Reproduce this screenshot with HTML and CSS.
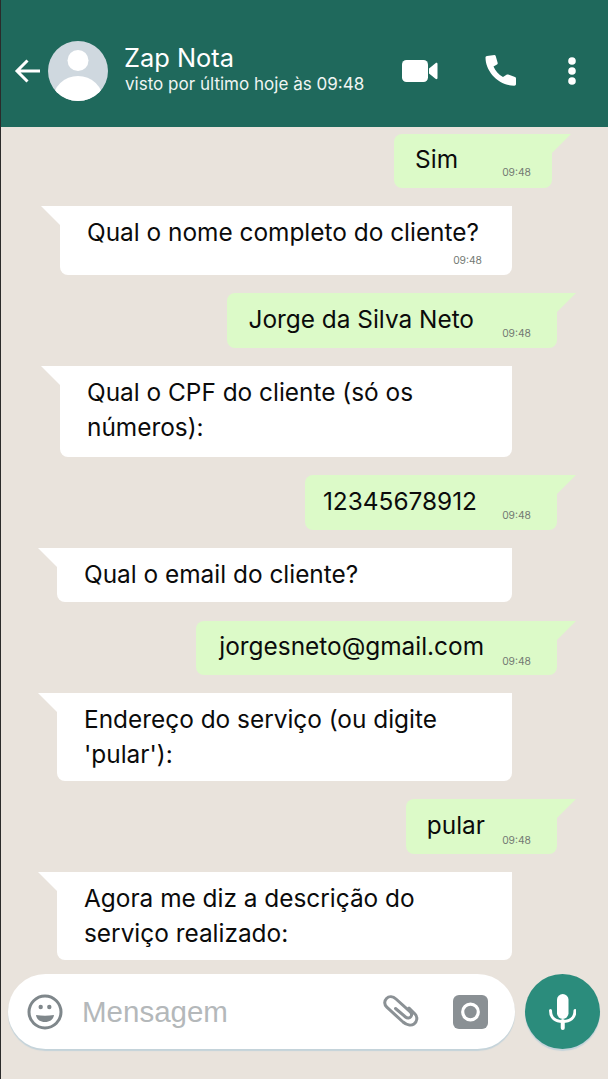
FILE: index.html
```html
<!DOCTYPE html>
<html lang="pt-BR">
<head>
    <meta charset="UTF-8">
    <meta name="viewport" content="width=device-width, initial-scale=1.0">
    <title>Zap Nota</title>
    <link rel="stylesheet" href="styles.css">
</head>
<body>
    <header class="topbar">
        <svg class="back" width="28" height="26" viewBox="0 0 28 26">
            <path d="M26 13H3M13.500 2.500L3 13l10.500 10.500" fill="none" stroke="#fff" stroke-width="3"/>
        </svg>
        <svg class="avatar" width="60" height="60" viewBox="0 0 60 60">
            <defs><clipPath id="round"><circle cx="30" cy="30" r="30"/></clipPath></defs>
            <circle cx="30" cy="30" r="30" fill="#cfd8df"/>
            <circle cx="30" cy="19.500" r="10.500" fill="#fff"/>
            <ellipse cx="30" cy="59" rx="25" ry="24" fill="#fff" clip-path="url(#round)"/>
        </svg>
        <div class="contact">
            <div class="contact-name">Zap Nota</div>
            <div class="contact-seen">visto por último hoje às 09:48</div>
        </div>
        <svg class="video" width="36" height="22" viewBox="0 0 36 22">
            <rect x="0" y="0" width="26" height="22" rx="4.500" fill="#fff"/>
            <path d="M27 8.500L33.500 3.200C34.500 2.500 35.500 3 35.500 4V18C35.500 19 34.500 19.500 33.500 18.800L27 13.500Z" fill="#fff"/>
        </svg>
        <svg class="phone" width="32" height="32" viewBox="0 0 32 32">
            <path d="M2 1L9.500 0C10 0 10.500 .3 10.700 1L12.700 8C12.800 8.600 12.600 9.200 12 9.600L8.500 11.500C10.500 16 13.500 19.500 18 22L21.500 19.800C22 19.400 22.700 19.300 23.300 19.600L30 22C30.700 22.300 31 22.800 31 23.500V29C31 30 30.300 30.700 29.300 30.700C13 30.700 .5 16 .5 2.500C.5 1.700 1 1.100 2 1Z" fill="#fff"/>
        </svg>
        <svg class="dots" width="8" height="28" viewBox="0 0 8 28">
            <circle cx="4" cy="4" r="3.800" fill="#fff"/>
            <circle cx="4" cy="14" r="3.800" fill="#fff"/>
            <circle cx="4" cy="24" r="3.800" fill="#fff"/>
        </svg>
    </header>

    <main class="chat">
        <div class="msg out sim"><span>Sim</span><time>09:48</time></div>
        <div class="msg in with-time"><span>Qual o nome completo do cliente?</span><time>09:48</time></div>
        <div class="msg out tall jorge"><span>Jorge da Silva Neto</span><time>09:48</time></div>
        <div class="msg in cpf"><span>Qual o CPF do cliente (só os números):</span></div>
        <div class="msg out tall digits"><span>12345678912</span><time>09:48</time></div>
        <div class="msg in in-wide"><span>Qual o email do cliente?</span></div>
        <div class="msg out email"><span>jorgesneto@gmail.com</span><time>09:48</time></div>
        <div class="msg in in-wide two-lines"><span>Endereço do serviço (ou digite 'pular'):</span></div>
        <div class="msg out tall pular"><span>pular</span><time>09:48</time></div>
        <div class="msg in in-wide two-lines"><span>Agora me diz a descrição do serviço realizado:</span></div>
    </main>

    <footer class="composer">
        <div class="input">
            <svg class="emoji" width="36" height="36" viewBox="0 0 36 36">
                <circle cx="18" cy="18" r="16" fill="none" stroke="#7f878b" stroke-width="3"/>
                <circle cx="13.700" cy="13" r="2.200" fill="#7f878b"/>
                <circle cx="22.300" cy="13" r="2.200" fill="#7f878b"/>
                <path d="M9 21Q18 22.500 27 21C26.500 25.500 23 28 18 28S9.500 25.500 9 21Z" fill="#7f878b"/>
            </svg>
            <div class="placeholder">Mensagem</div>
            <svg class="clip" width="37" height="33" viewBox="0 0 37 33">
                <path d="M12.500 13.500L22.500 22C24.500 23.700 27 23 28 21.500C29 20 28.500 18 27 16.700L13 4C10 1.300 6 1 3.500 3.500C1 6 1.200 9.800 3.800 12.200L20 27C23.500 30 28 31 31 29C34 27 35 22 32 19L26 13" fill="none" stroke="#8b9195" stroke-width="3" stroke-linecap="round"/>
            </svg>
            <svg class="camera" width="35" height="34" viewBox="0 0 35 34">
                <rect width="35" height="34" rx="6" fill="#8a9094"/>
                <circle cx="17.500" cy="17" r="7.800" fill="none" stroke="#fff" stroke-width="3.200"/>
            </svg>
        </div>
        <div class="mic">
            <svg width="27" height="36" viewBox="0 0 27 36">
                <rect x="8" y="0" width="11.500" height="25" rx="5.750" fill="#fff"/>
                <path d="M1.500 16.500C1.500 24 6.500 27.500 13.750 27.500S26 24 26 16.500" fill="none" stroke="#fff" stroke-width="3" stroke-linecap="round"/>
                <path d="M13.750 27V34" stroke="#fff" stroke-width="4" stroke-linecap="round"/>
            </svg>
        </div>
    </footer>
</body>
</html>
```

FILE: styles.css
```css
* {
    box-sizing: border-box;
}
body {
    margin: 0;
    height: 1079px;
    display: flex;
    flex-direction: column;
    overflow: hidden;
    background-color: #e9e3dc;
    border-left: 1px solid #2b2b2b;
    font-family: Inter, "Liberation Sans", sans-serif;
    color: #0b0b0b;
}
.topbar {
    height: 127px;
    flex: none;
    display: flex;
    align-items: flex-start;
    padding: 41px 0 0 13px;
    background-color: #1f695c;
    color: #fff;
}
.back {
    margin-top: 17px;
}
.avatar {
    margin-left: 6px;
}
.contact {
    width: 277px;
    margin-left: 17px;
}
.contact-name {
    font-size: 25.400px;
    line-height: 34px;
    margin-left: -1px;
}
.contact-seen {
    font-size: 17.050px;
    line-height: 20px;
    margin-top: -1px;
    color: #f0f5f3;
}
.video {
    margin-top: 19px;
}
.phone {
    margin: 14px 0 0 47px;
}
.dots {
    margin: 16px 0 0 51px;
}
.chat {
    flex: 1;
    min-height: 0;
    display: flex;
    flex-direction: column;
    align-items: flex-start;
    gap: 18px;
    padding-top: 7px;
}
.msg {
    position: relative;
    font-size: 24.400px;
    line-height: 35px;
}
.msg::before {
    content: "";
    position: absolute;
    top: 0;
    width: 19px;
    height: 19px;
}
.in {
    width: 452px;
    margin-left: 59px;
    padding: 9px 20px 10px 27px;
    background-color: #fff;
    border-radius: 0 0 8px 8px;
}
.in::before {
    right: 100%;
    background-color: #fff;
    clip-path: polygon(0 0, 100% 0, 100% 100%);
}
.with-time {
    padding-bottom: 25px;
}
.cpf {
    padding-bottom: 12px;
}
.in-wide {
    width: 455px;
    margin-left: 56px;
}
.two-lines {
    padding-bottom: 9px;
}
.out {
    align-self: flex-end;
    margin-right: 51px;
    padding: 8px 73px 11px 22px;
    background-color: #dcfac8;
    border-radius: 8px 0 8px 8px;
}
.out::before {
    left: 100%;
    background-color: #dcfac8;
    clip-path: polygon(0 0, 100% 0, 0 100%);
}
.tall {
    padding-top: 9px;
}
.sim {
    margin-right: 56px;
    padding-left: 21px;
    padding-right: 94px;
}
.jorge {
    padding-left: 21px;
    padding-right: 83px;
}
.digits {
    padding-left: 18px;
    padding-right: 80px;
}
.email {
    margin-top: 1px;
    padding-left: 23px;
    padding-right: 73px;
}
.pular {
    padding-left: 21px;
    padding-right: 72px;
}
.msg time {
    position: absolute;
    right: 26px;
    bottom: 8px;
    font-size: 10.300px;
    line-height: 14px;
    color: #737973;
}
.sim time {
    right: 21px;
    bottom: 9px;
}
.email time,
.pular time {
    bottom: 7px;
}
.in time {
    right: 30px;
}
.composer {
    flex: none;
    display: flex;
    gap: 10px;
    padding: 14px 8px 30px 7px;
}
.input {
    width: 507px;
    height: 75px;
    display: flex;
    align-items: center;
    padding-left: 19px;
    background-color: #fff;
    border-radius: 38px;
    box-shadow: 0 2px 1px #c4d3da;
}
.placeholder {
    width: 301px;
    margin-left: 19px;
    font-size: 29.500px;
    font-family: "Liberation Sans", Arial, sans-serif;
    color: #b4b8ba;
}
.camera {
    margin-left: 33px;
}
.mic {
    width: 75px;
    height: 75px;
    display: flex;
    align-items: center;
    justify-content: center;
    background-color: #2b8c7c;
    border-radius: 50%;
    box-shadow: 0 2px 1px #c4d3da;
}
```
